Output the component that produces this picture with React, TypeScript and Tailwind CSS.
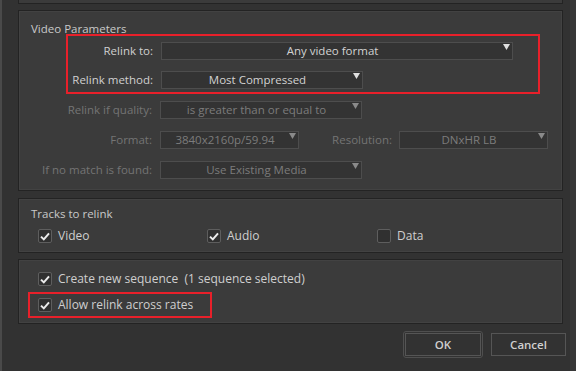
import React from "react";

const Arrow = ({ dim }: { dim?: boolean }) => (
  <svg width="7" height="6" viewBox="0 0 7 6" className="mt-[1px] mr-[2px] shrink-0">
    <path d="M0 0 H7 L3.5 6 Z" fill={dim ? "#8a8a8a" : "#e0e0e0"} />
  </svg>
);

const Select = ({ value, width, dim }: { value: string; width: string; dim?: boolean }) => (
  <div
    className={`flex h-[18px] items-start border border-[#4d4d4d] bg-[#333333] ${width}`}
  >
    <span
      className={`flex-1 text-center leading-[16px] ${dim ? "text-[#7c7c7c]" : "text-[#d2d2d2]"}`}
    >
      {value}
    </span>
    <Arrow dim={dim} />
  </div>
);

const Check = ({ on }: { on?: boolean }) => (
  <div className="flex h-[14px] w-[14px] shrink-0 items-center justify-center rounded-[2px] border border-[#5e5e5e] bg-[#303030]">
    {on && (
      <svg width="10" height="9" viewBox="0 0 10 9">
        <path d="M1 4.6 L3.8 7.4 L9 1.4" fill="none" stroke="#ececec" strokeWidth="2" />
      </svg>
    )}
  </div>
);

const CheckItem = ({ label, on }: { label: string; on?: boolean }) => (
  <div className="flex items-center gap-[6px]">
    <Check on={on} />
    <span className="whitespace-pre text-[12px] leading-[14px] text-[#cfcfcf]">{label}</span>
  </div>
);

const Panel = ({ className, children }: { className: string; children?: React.ReactNode }) => (
  <div className={`w-[545px] border border-[#232323] bg-[#3b3b3b] shadow-[inset_0_0_0_1px_#424242] ${className}`}>
    {children}
  </div>
);

export default function App() {
  return (
    <div
      className="flex h-[371px] w-[576px] overflow-hidden border-l-2 border-l-[#4a4a4a] bg-[#323232] text-[11.5px]"
      style={{ fontFamily: '"Open Sans", "Noto Sans", sans-serif' }}
    >
      <div className="flex flex-col pl-[16px]">
        {/* cut-off panel above */}
        <div className="h-[4px] w-[545px] border-x border-b border-[#232323] bg-[#3b3b3b]" />

        {/* Video Parameters */}
        <Panel className="mt-[6px] h-[181px]">
          <div className="pl-[12px] pt-[11px] leading-[13px] text-[#c9c9c9]">Video Parameters</div>

          <div className="-mt-[1px] ml-[47px] w-[474px] border-2 border-[#e8202a] pb-[3px] pt-[6px]">
            <div className="flex items-center gap-[8px]">
              <span className="w-[85px] text-right text-[#d0d0d0]">Relink to:</span>
              <Select value="Any video format" width="w-[352px]" />
            </div>
            <div className="mt-[11px] flex items-center gap-[8px]">
              <span className="w-[85px] text-right text-[#d0d0d0]">Relink method:</span>
              <Select value="Most Compressed" width="w-[202px]" />
            </div>
          </div>

          <div className="mt-[7px] flex items-center gap-[8px]">
            <span className="w-[133px] text-right text-[#747474]">Relink if quality:</span>
            <Select value="is greater than or equal to" width="w-[202px]" dim />
          </div>
          <div className="mt-[12px] flex items-center">
            <span className="w-[133px] text-right text-[#747474]">Format:</span>
            <div className="ml-[8px]">
              <Select value="3840x2160p/59.94" width="w-[139px]" dim />
            </div>
            <span className="w-[93px] text-right text-[#747474]">Resolution:</span>
            <div className="ml-[7px]">
              <Select value="DNxHR LB" width="w-[149px]" dim />
            </div>
          </div>
          <div className="mt-[12px] flex items-center gap-[8px]">
            <span className="w-[133px] text-right text-[#747474]">If no match is found:</span>
            <Select value="Use Existing Media" width="w-[202px]" dim />
          </div>
        </Panel>

        {/* Tracks to relink */}
        <Panel className="mt-[7px] h-[55px]">
          <div className="pl-[12px] pt-[8px] leading-[13px] text-[#c9c9c9]">Tracks to relink</div>
          <div className="mt-[9px] flex pl-[19px]">
            <div className="w-[169px]">
              <CheckItem label="Video" on />
            </div>
            <div className="w-[170px]">
              <CheckItem label="Audio" on />
            </div>
            <CheckItem label="Data" />
          </div>
        </Panel>

        {/* Options */}
        <Panel className="mt-[6px] h-[65px]">
          <div className="pl-[19px] pt-[12px]">
            <CheckItem label="Create new sequence  (1 sequence selected)" on />
          </div>
          <div className="ml-[9px] mt-[6px] w-[184px] border-2 border-[#e8202a] py-[4px] pl-[8px]">
            <CheckItem label="Allow relink across rates" on />
          </div>
        </Panel>

        {/* Buttons */}
        <div className="mt-[7px] flex items-start pl-[385px]">
          <div className="h-[27px] w-[80px] rounded-[3px] border border-[#4f4f4f] p-[1px]">
            <div className="flex h-full w-full items-center justify-center border border-[#555555] font-semibold text-[#cfcfcf]">
              OK
            </div>
          </div>
          <div className="ml-[8px] mt-[2px] flex h-[23px] w-[75px] items-center justify-center border border-[#555555] font-semibold text-[#cfcfcf]">
            Cancel
          </div>
        </div>
      </div>
      <div className="ml-auto w-[6px] bg-[#383838]" />
    </div>
  );
}
